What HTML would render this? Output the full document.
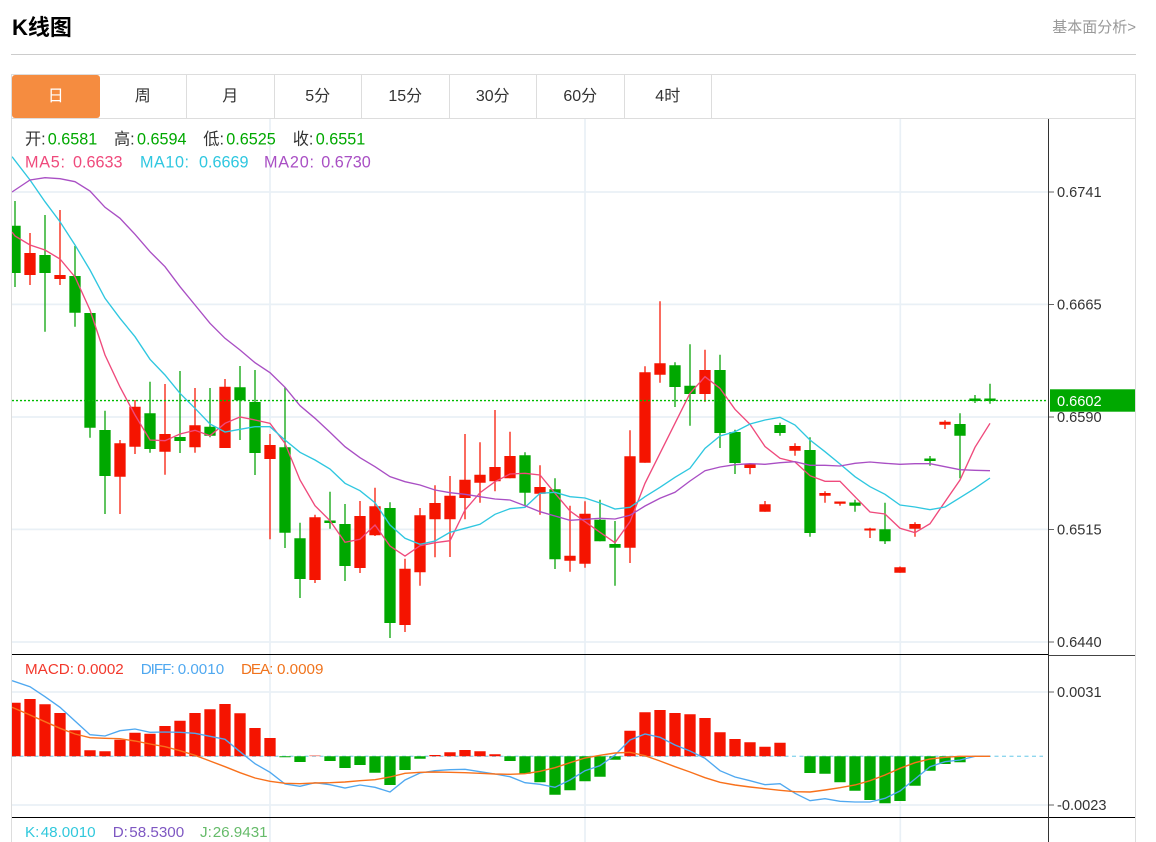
<!DOCTYPE html>
<html lang="zh">
<head>
<meta charset="utf-8">
<title>K线图</title>
<style>
html,body{margin:0;padding:0;background:#fff;width:1156px;height:842px;overflow:hidden}
body{position:relative;font-family:"Liberation Sans","Noto Sans CJK SC",sans-serif;color:#333}
.title{position:absolute;left:12px;top:12px;font-size:22px;line-height:32px;font-weight:bold;color:#000}
.more{position:absolute;right:20px;top:17px;font-size:15px;line-height:22px;color:#999}
.hr{position:absolute;left:11px;top:54px;width:1125px;height:1px;background:#ccc}
.box{position:absolute;left:11px;top:74px;height:770px;border:1px solid #ddd;box-sizing:border-box;width:1125px}
.tabs{position:absolute;left:12px;top:75px;height:43px;display:flex}
.tab{width:87.5px;box-sizing:border-box;height:43px;line-height:43px;text-align:center;font-size:16px;color:#333;border-right:1px solid #ddd}
.tab.on{background:#f58c40;color:#fff;border-radius:3px;border-right:0}
.tl{position:absolute;left:12px;top:118px;width:1123px;height:1px;background:#ddd}
svg{position:absolute;left:0;top:0}
svg text{font-family:"Liberation Sans","Noto Sans CJK SC",sans-serif}
</style>
</head>
<body>
<div class="title">K线图</div>
<div class="more">基本面分析&gt;</div>
<div class="hr"></div>
<div class="box"></div>
<div class="tabs">
<div class="tab on">日</div><div class="tab">周</div><div class="tab">月</div><div class="tab">5分</div><div class="tab">15分</div><div class="tab">30分</div><div class="tab">60分</div><div class="tab">4时</div>
</div>
<div class="tl"></div>
<svg width="1156" height="842" viewBox="0 0 1156 842" xmlns="http://www.w3.org/2000/svg">
<defs>
<clipPath id="c"><rect x="12" y="119" width="1036" height="723"/></clipPath>
</defs>
<g fill="none" stroke="#e9f0f6" stroke-width="1.7">
<path d="M12 192H1048M12 304.4H1048M12 417H1048M12 529.4H1048M12 642H1048M12 692H1048M12 805H1048"/>
<path d="M270 119V842M585 119V842M900.3 119V842"/>
</g>
<g clip-path="url(#c)" fill="none">
<path stroke="#2bb02b" stroke-width="1.5" d="M15 201V287M45 215V331.7M75 246V326.7M90 313V437.7M105 410.7V514M150 381.7V452.7M180 371V453M210 388V437.3M240 366V440M255 370V475M285 387.3V548M300 522.7V598M330 491.7V528.7M345 504V581M390 502.3V638M525 452.3V506M555 478.3V569M600 499.7V541.3M615 521V585.7M675 362.3V407M690 344.3V425.7M720 354.7V448M735 429.7V474M780 422.7V435.7M810 437.3V536.7M855 499.7V511.7M885 502.7V544M930 456V465.7M960 413.3V478.3M975 395V403M990 383.7V403.7"/>
<path stroke="#f83a2a" stroke-width="1.5" d="M30 233V285M60 210V285M120 440V514M135 400V454M165 384V474.7M195 388V452.7M225 379V448M270 434V539.3M315 514.7V583M360 501V573M375 487.7V536M405 558.7V632M420 508V585.7M435 485.3V557.3M450 476V557M465 434V519.3M480 442.3V502.7M495 410V491.3M510 431.7V478.3M540 465.3V514.7M570 505.7V571.7M585 501.3V567.7M630 430.3V563M645 366.3V462.7M660 301.3V382.7M705 349.7V401.7M750 463V474.3M765 501V511.7M795 443.3V455.7M825 491.3V502.7M840 502V505.7M870 527.7V538M900 566.5V572.7M915 522.3V536.7M945 420.3V429"/>
<path stroke="#00a800" stroke-width="11.3" d="M15 225.7V273M45 255V273M75 276V312.7M90 313V427.7M105 430V476M150 413.3V449M180 437V441M210 426.7V435.7M240 387.3V400.3M255 402V453M285 447.3V532.7M300 538.3V579M330 520.5V523M345 524V566M390 508V623M525 455.3V492.7M555 489.3V559.3M600 519.7V541.3M615 544V547.7M675 365.3V387M690 385.7V394M720 370V433M735 432V463M780 425V433M810 450V533M855 502.5V505.7M885 529.3V541.3M930 458.5V461M960 424V435.7M975 398.5V401M990 398.5V401"/>
<path stroke="#f51400" stroke-width="11.3" d="M30 253V275M60 275V279M120 443.3V476.7M135 406.7V446.7M165 434V451.7M195 425.3V447.3M225 386.7V448M270 445V459M315 517.3V580M360 516V568M375 506.3V535.3M405 568.7V625M420 515.3V572.3M435 503V519.3M450 495.7V519.3M465 479.7V498M480 474.7V482.7M495 467V481.3M510 456V478.3M540 487V493.7M570 555.7V560.7M585 513.7V563.7M630 456.3V547.7M645 372.3V462.7M660 363.3V374.7M705 370V394M750 464.3V468M765 504.3V511.7M795 446V450.7M825 493V495.7M840 501.5V503.7M870 528.5V530.5M900 567.3V572.7M915 524V528.7M945 421.7V424.7"/>
<path stroke="#ef4a7c" stroke-width="1.35" d="M12 232L15 236L30 245L45 250L60 259L75 277L90 310L105 355L120 387L135 415L150 440L165 440.7L180 434L195 430.3L210 435.7L225 423.3L240 417L255 420L270 423.3L285 443.3L300 480L315 505.7L330 520.7L345 542.3L360 539.3L375 525L390 546L405 556L420 545.7L435 542.7L450 540.7L465 510L480 492.7L495 481.7L510 474L525 473.3L540 475L555 493.3L570 511L585 521.7L600 532.3L615 542.7L630 521.7L645 483.3L660 453.3L675 423.3L690 393.3L705 376.7L720 388.3L735 409.3L750 424.3L765 446.5L780 458.3L795 462L810 475.7L825 481.3L840 481.3L855 496.7L870 512L885 514L900 528.3L915 532.7L930 523.7L945 501.7L960 480L975 447.3L990 423.3"/>
<path stroke="#2fc7e0" stroke-width="1.35" d="M12 156.7L30 180L45 201.7L60 221.7L75 245L90 270L105 298.3L120 318.3L135 336.7L150 359.3L165 375L180 393.3L195 408.3L210 424L225 432L240 429.3L255 426.7L270 426.7L285 440L300 452.3L315 460L330 469L345 483.3L360 490.7L375 502.7L390 525L405 538.3L420 544.3L435 541L450 532.3L465 528.3L480 524.3L495 514.3L510 508.7L525 507.3L540 493.3L555 492.3L570 496.7L585 498L600 503L615 509L630 507.3L645 496.7L660 487.3L675 477.3L690 468.3L705 448.3L720 436L735 431.7L750 424L765 420L780 417.3L795 425L810 440L825 451.7L840 464L855 476.7L870 486.7L885 494.3L900 505L915 507L930 509.7L945 507L960 497.7L975 488.3L990 478"/>
<path stroke="#a94fc4" stroke-width="1.35" d="M12 192L30 180L45 177.7L60 178.7L75 181.7L90 191L105 207.3L120 218.3L135 234.3L150 251.7L165 266.7L180 286.7L195 305L210 323.3L225 338.3L240 350L255 362.7L270 372.7L285 387.3L300 405.7L315 418.3L330 432.3L345 446.7L360 457.7L375 466.7L390 476.7L405 481.7L420 485L435 490L450 492.7L465 494.3L480 496.7L495 499L510 500L525 505.7L540 511.7L555 516L570 520.3L585 519.3L600 518.3L615 519L630 515.3L645 506L660 498.3L675 492.3L690 481L705 470.7L720 467L735 464.7L750 463.7L765 464.3L780 462.7L795 461.7L810 465.3L825 465.3L840 466L855 463.3L870 462L885 463.3L900 464.3L915 463.7L930 463.7L945 466.7L960 469.7L975 470.3L990 470.7"/>
<path stroke="#00bb00" stroke-width="1.4" stroke-dasharray="2 2" d="M12 400.6H1046"/>

<path stroke="#8fd6ee" stroke-width="1.4" stroke-dasharray="4 3.5" d="M12 756.3H1043"/>
<path stroke="#f51400" stroke-width="11.3" d="M15 702.7V756.3M30 699V756.3M45 704.3V756.3M60 713V756.3M75 730.3V756.3M90 750.3V756.3M105 751.3V756.3M120 739.7V756.3M135 732.7V756.3M150 733.7V756.3M165 726V756.3M180 720.7V756.3M195 713V756.3M210 709.3V756.3M225 704V756.3M240 713.3V756.3M255 728V756.3M270 738V756.3M435 755V756.3M450 752.3V756.3M465 750V756.3M480 751.3V756.3M495 754.3V756.3M630 730.7V756.3M645 712.3V756.3M660 710V756.3M675 713V756.3M690 714.3V756.3M705 718V756.3M720 732.3V756.3M735 739V756.3M750 742.3V756.3M765 746.7V756.3M780 742.7V756.3"/>
<path stroke="#f5a8a0" stroke-width="11.3" d="M315 755V756.3"/>
<path stroke="#00a800" stroke-width="11.3" d="M285 756.3V757.2M300 756.3V762M330 756.3V761M345 756.3V768M360 756.3V765M375 756.3V772.7M390 756.3V785M405 756.3V770M420 756.3V758.7M510 756.3V761M525 756.3V773.7M540 756.3V782.3M555 756.3V794.7M570 756.3V790.3M585 756.3V781.3M600 756.3V776.7M615 756.3V759.7M810 756.3V773M825 756.3V773.7M840 756.3V782.3M855 756.3V790.7M870 756.3V800M885 756.3V803.3M900 756.3V801M915 756.3V785.7M930 756.3V770.7M945 756.3V764M960 756.3V762.3"/>
<path stroke="#4fa8f0" stroke-width="1.35" d="M12 680.7L30 686.7L45 696.7L60 707.3L75 721L90 734.7L105 736L120 730.7L135 729L150 732.3L165 732L180 732.3L195 733.3L210 736.3L225 739.3L240 751.7L255 763.7L270 772.3L285 784L300 786.3L315 782.7L330 784.7L345 788L360 785L375 787.3L390 792L405 780L420 773L435 770.7L450 769.7L465 769.3L480 771.7L495 774L510 776.7L525 782.7L540 784.3L555 787.3L570 780L585 770.7L600 765.7L615 755L630 740L645 734L660 737.3L675 745L690 751L705 758.3L720 770.7L735 777L750 780.7L765 784.7L780 783.7L795 793.3L810 800.7L825 798.7L840 801.3L855 802L870 802L885 798.3L900 791L915 779L930 766.7L945 761.7L960 760L975 756.3L990 756.3"/>
<path stroke="#f8711c" stroke-width="1.4" d="M12 707.3L30 715L45 721.7L60 728.3L75 734L90 737.7L105 738.3L120 738.7L135 741L150 744L165 746.7L180 750.7L195 755.3L210 761L225 766.7L240 772.7L255 778L270 781.3L285 783.3L300 783.7L315 783L330 782.7L345 782L360 780.7L375 779.7L390 777L405 773.3L420 772.3L435 772L450 772.3L465 772.7L480 773.3L495 774L510 774.3L525 773.7L540 771.3L555 767.7L570 762.7L585 758L600 755.3L615 753L630 752.3L645 755.7L660 761L675 766.7L690 772L705 777.7L720 782.3L735 785L750 787L765 788.7L780 790.3L795 791.7L810 792L825 790L840 787.7L855 785L870 780.7L885 775L900 768.3L915 762.7L930 759L945 757.3L960 756.3L975 756.3L990 756.3"/>
</g>
<g fill="none" stroke="#000" stroke-width="1">
<path d="M12 654.5H1048"/>
<path d="M12 817.5H1135"/>
<path d="M1048.5 655.5H1135" stroke="#444"/>
<path d="M1048.5 119V842" stroke="#333"/>
</g>
<path fill="none" stroke="#666" stroke-width="1" d="M1049 192H1054M1049 304.5H1054M1049 417H1054M1049 529.5H1054M1049 642H1054M1049 692H1054M1049 805H1054"/>
<g font-size="14.6" fill="#333">
<text x="1057" y="197">0.6741</text>
<text x="1057" y="309.5">0.6665</text>
<text x="1057" y="422">0.6590</text>
<text x="1057" y="534.5">0.6515</text>
<text x="1057" y="647">0.6440</text>
<text x="1057" y="697">0.0031</text>
<text x="1057" y="810">-0.0023</text>
</g>
<rect x="1050" y="389.3" width="85" height="22.4" fill="#00a800"/>
<text x="1057" y="406" font-size="14.6" fill="#fff">0.6602</text>
<g font-size="16.2">
<text x="25" y="144.5" fill="#333">开:</text><text x="47.7" y="144.5" fill="#00a800">0.6581</text>
<text x="114" y="144.5" fill="#333">高:</text><text x="137" y="144.5" fill="#00a800">0.6594</text>
<text x="203.3" y="144.5" fill="#333">低:</text><text x="226.3" y="144.5" fill="#00a800">0.6525</text>
<text x="292.7" y="144.5" fill="#333">收:</text><text x="315.7" y="144.5" fill="#00a800">0.6551</text>
<text x="25" y="167.5" fill="#ef4a7c" textLength="40">MA5:</text><text x="73" y="167.5" fill="#ef4a7c">0.6633</text>
<text x="140" y="167.5" fill="#2fc7e0" textLength="49">MA10:</text><text x="199" y="167.5" fill="#2fc7e0">0.6669</text>
<text x="264" y="167.5" fill="#a94fc4" textLength="50">MA20:</text><text x="321.3" y="167.5" fill="#a94fc4">0.6730</text>
</g>
<g font-size="15.2">
<text x="25" y="674" fill="#f2382c" textLength="49">MACD:</text><text x="77.3" y="674" fill="#f2382c">0.0002</text>
<text x="140.7" y="674" fill="#4fa8f0" textLength="34">DIFF:</text><text x="177.7" y="674" fill="#4fa8f0">0.0010</text>
<text x="241" y="674" fill="#f0731c" textLength="32.3">DEA:</text><text x="277" y="674" fill="#f0731c">0.0009</text>
<text x="25" y="837" fill="#30c8dc">K:</text><text x="40.7" y="837" fill="#30c8dc">48.0010</text>
<text x="112.7" y="837" fill="#7e57c2">D:</text><text x="129.3" y="837" fill="#7e57c2">58.5300</text>
<text x="200" y="837" fill="#66bb6a">J:</text><text x="212.7" y="837" fill="#66bb6a">26.9431</text>
</g>
</svg>
</body>
</html>
